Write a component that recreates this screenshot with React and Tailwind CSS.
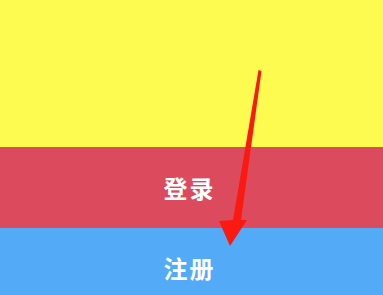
export default function App() {
  return (
    <div className="relative w-[383px] h-[295px] overflow-hidden" style={{ fontFamily: '"Noto Sans CJK SC", "Noto Sans", sans-serif' }}>
      <div className="h-[147px] bg-[#fefb50]" />
      <div className="h-[81px] bg-[#dc4b5d] flex items-center justify-center pr-[4px] text-white text-[24px] font-semibold tracking-[2px]">
        登录
      </div>
      <div className="h-[80px] bg-[#53abf8] flex items-center justify-center pr-[4px] text-white text-[24px] font-semibold tracking-[2px]">
        注册
      </div>
      <svg className="absolute left-0 top-0" width="383" height="295" viewBox="0 0 383 295">
        <polygon points="258.5,70 261.5,71 241,220 247,220 230,246 219,221 233,220" fill="#fa1a12" />
      </svg>
    </div>
  );
}
